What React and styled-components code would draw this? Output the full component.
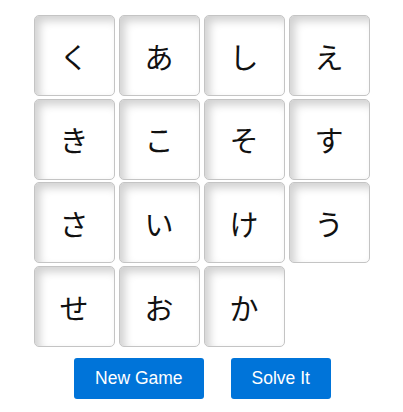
import React from 'react'
import styled, { createGlobalStyle } from 'styled-components'

const GlobalStyle = createGlobalStyle`
    body {
        margin: 0;
        background: #fff;
        font-family: "Liberation Sans", Arial, sans-serif;
    }
`

const Page = styled.div`
    display: flex;
    flex-direction: column;
    align-items: center;
    padding-top: 15px;
`

const Board = styled.div`
    display: grid;
    grid-template-columns: repeat(4, 81px);
    grid-auto-rows: 81px;
    column-gap: 4px;
    row-gap: 2.7px;
`

const Tile = styled.div`
    box-sizing: border-box;
    display: flex;
    align-items: center;
    justify-content: center;
    border: 1px solid #c4c4c4;
    border-radius: 5px;
    background: #fff;
    box-shadow: inset 5px 5px 9px rgba(0, 0, 0, 0.18);
    font-family: "Noto Sans CJK JP", sans-serif;
    font-size: 29px;
    color: #111;
    cursor: pointer;
`

const Controls = styled.div`
    display: flex;
    gap: 27px;
    margin-top: 11px;
    padding-left: 2px;
`

const Button = styled.button`
    height: 41px;
    padding: 0 21px;
    border: none;
    border-radius: 3px;
    background: #0074d9;
    color: #fff;
    font-family: "Liberation Sans", Arial, sans-serif;
    font-size: 17.5px;
    cursor: pointer;
`

const tiles = ['く', 'あ', 'し', 'え', 'き', 'こ', 'そ', 'す', 'さ', 'い', 'け', 'う', 'せ', 'お', 'か']

const App = () => {
    return (
        <Page>
            <GlobalStyle />
            <Board>
                {tiles.map((t) => (
                    <Tile key={t}>{t}</Tile>
                ))}
            </Board>
            <Controls>
                <Button>New Game</Button>
                <Button>Solve It</Button>
            </Controls>
        </Page>
    )
}

export default App
